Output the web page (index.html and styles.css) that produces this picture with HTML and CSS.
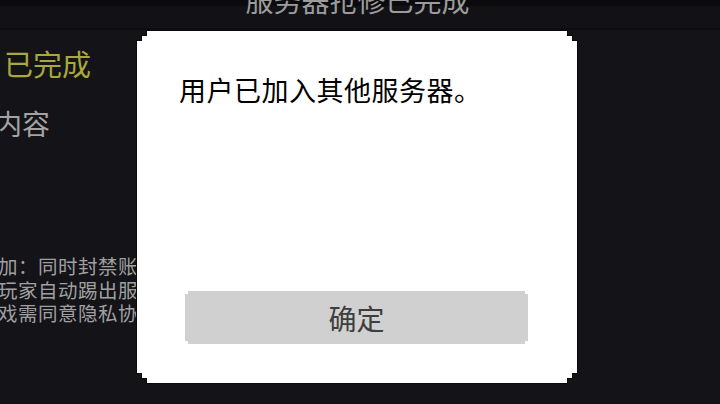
FILE: index.html
```html
<!DOCTYPE html>
<html lang="zh-CN">
<head>
<meta charset="utf-8">
<title>服务器抢修已完成</title>
<link rel="stylesheet" href="styles.css">
</head>
<body>
<div class="page">
  <header class="topbar">
    <div class="title">服务器抢修已完成</div>
  </header>
  <section class="notes">
    <div class="headline">已完成</div>
    <div class="subhead">更新内容</div>
    <div class="lines">
      <div class="line">增加：同时封禁账号与设备</div>
      <div class="line">线玩家自动踢出服务器</div>
      <div class="line">游戏需同意隐私协议</div>
    </div>
  </section>
</div>
<div class="dialog-frame">
  <div class="dialog">
    <p class="message">用户已加入其他服务器。</p>
    <div class="button"><span>确定</span></div>
  </div>
</div>
</body>
</html>
```
FILE: styles.css
```css
html, body {
  margin: 0;
  padding: 0;
}
body {
  width: 720px;
  height: 404px;
  overflow: hidden;
  background: #131318;
  font-family: "Noto Sans CJK SC", "Noto Sans", sans-serif;
  position: relative;
}
.page {
  display: flex;
  flex-direction: column;
  height: 404px;
}
.topbar {
  height: 28px;
  background: linear-gradient(#0b0b0e 0 6px, #121216 6px);
  border-bottom: 2px solid #0d0d10;
  overflow: hidden;
  display: flex;
  justify-content: center;
}
.title {
  font-size: 28px;
  line-height: 28px;
  margin-top: -14px;
  margin-left: -5px;
  color: #9c9c9c;
  white-space: nowrap;
}
.notes {
  display: flex;
  flex-direction: column;
  overflow: hidden;
}
.headline {
  margin-top: 19px;
  margin-left: 4px;
  font-size: 29px;
  line-height: 29px;
  color: #aaa83a;
  white-space: nowrap;
}
.subhead {
  margin-top: 31px;
  margin-left: -62px;
  font-size: 28px;
  line-height: 28px;
  color: #a3a3a3;
  white-space: nowrap;
}
.lines {
  margin-top: 117px;
  display: flex;
  flex-direction: column;
}
.line {
  margin-left: -22px;
  font-size: 19.5px;
  line-height: 23.5px;
  letter-spacing: 0.5px;
  color: #a0a0a0;
  white-space: nowrap;
}
.dialog-frame {
  position: absolute;
  left: 136px;
  top: 30px;
  width: 442px;
  height: 354px;
  background: #0a0a0c;
  clip-path: polygon(10px 0, calc(100% - 10px) 0, calc(100% - 10px) 5px, calc(100% - 5px) 5px, calc(100% - 5px) 10px, 100% 10px, 100% calc(100% - 10px), calc(100% - 5px) calc(100% - 10px), calc(100% - 5px) calc(100% - 5px), calc(100% - 10px) calc(100% - 5px), calc(100% - 10px) 100%, 10px 100%, 10px calc(100% - 5px), 5px calc(100% - 5px), 5px calc(100% - 10px), 0 calc(100% - 10px), 0 10px, 5px 10px, 5px 5px, 10px 5px);
}
.dialog {
  position: absolute;
  left: 1px;
  top: 1px;
  width: 440px;
  height: 352px;
  background: #ffffff;
  display: flex;
  flex-direction: column;
  clip-path: polygon(10px 0, calc(100% - 10px) 0, calc(100% - 10px) 5px, calc(100% - 5px) 5px, calc(100% - 5px) 10px, 100% 10px, 100% calc(100% - 10px), calc(100% - 5px) calc(100% - 10px), calc(100% - 5px) calc(100% - 5px), calc(100% - 10px) calc(100% - 5px), calc(100% - 10px) 100%, 10px 100%, 10px calc(100% - 5px), 5px calc(100% - 5px), 5px calc(100% - 10px), 0 calc(100% - 10px), 0 10px, 5px 10px, 5px 5px, 10px 5px);
}
.message {
  margin: 45px 0 0 42px;
  font-size: 27px;
  line-height: 28px;
  letter-spacing: 0.5px;
  color: #000000;
  white-space: nowrap;
}
.button {
  margin: auto 0 39px 48px;
  width: 343px;
  height: 53px;
  background: #d0d0d0;
  display: flex;
  align-items: center;
  justify-content: center;
  clip-path: polygon(3px 0, calc(100% - 3px) 0, calc(100% - 3px) 3px, 100% 3px, 100% calc(100% - 3px), calc(100% - 3px) calc(100% - 3px), calc(100% - 3px) 100%, 3px 100%, 3px calc(100% - 3px), 0 calc(100% - 3px), 0 3px, 3px 3px);
}
.button span {
  font-size: 28px;
  line-height: 28px;
  color: #3e3e3e;
}
```
